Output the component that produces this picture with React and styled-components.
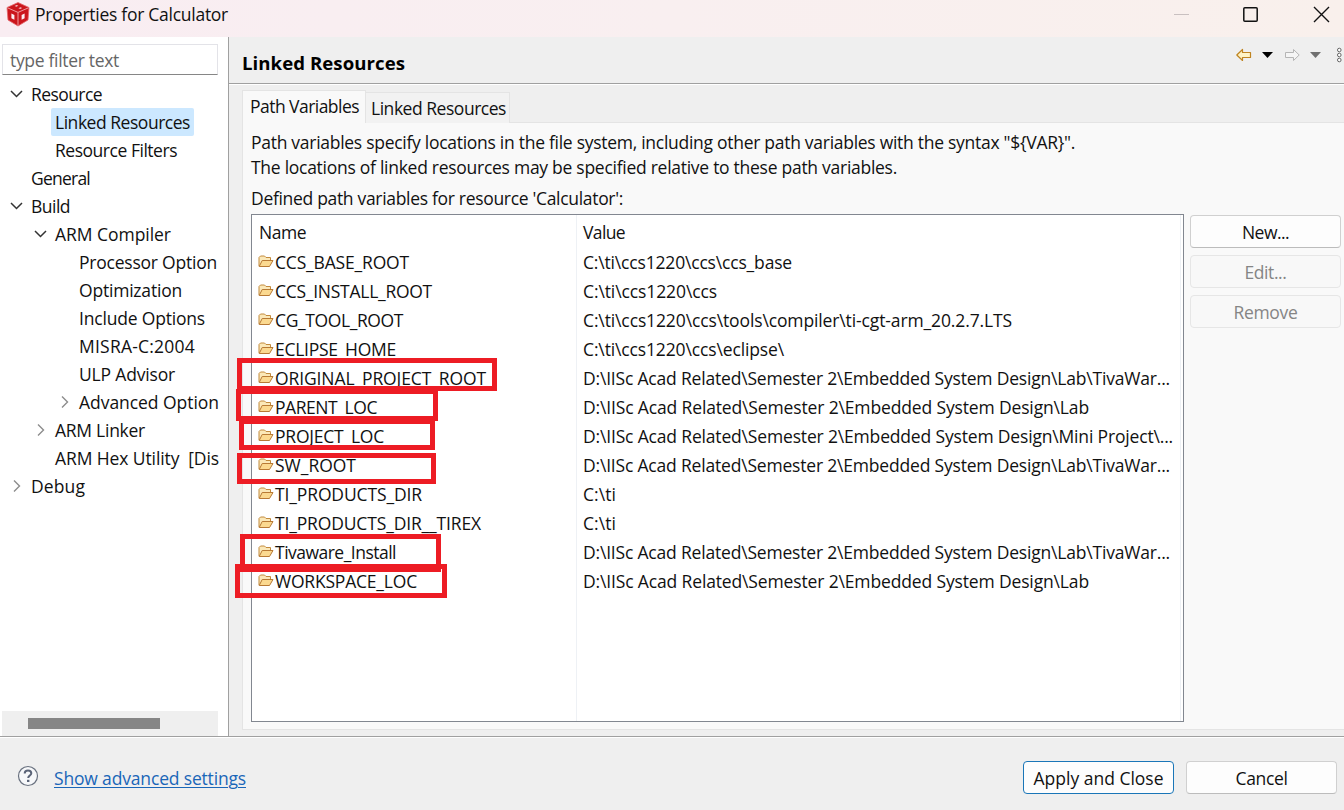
import React, { useLayoutEffect, useRef, useState } from "react";
import styled, { createGlobalStyle, css } from "styled-components";

const Global = createGlobalStyle`
  * { box-sizing: border-box; }
  body { margin: 0; overflow: hidden; background: #efefef; }
`;

const Window = styled.div`
  position: relative;
  width: 1344px;
  height: 810px;
  display: flex;
  flex-direction: column;
  overflow: hidden;
  background: #efefef;
  color: #111;
  font: 17.5px/28px "Open Sans", "Noto Sans", sans-serif;
`;

const TitleBar = styled.header`
  display: flex;
  align-items: flex-start;
  height: 37px;
  flex: none;
  padding: 0 0 0 5px;
  background: linear-gradient(90deg, #f9edf2, #f9eff0 50%, #f9f0ec);
`;
const TitleText = styled.div`
  margin-left: 4px;
  flex: 1;
`;
const WindowButtons = styled.div`
  display: flex;
  align-items: center;
  height: 30px;
  svg { display: block; }
`;

const Body = styled.div`
  display: flex;
  height: 699px;
  flex: none;
`;

const Sidebar = styled.aside`
  display: flex;
  flex-direction: column;
  width: 229px;
  flex: none;
  padding: 7px 0 0 2px;
  background: #fff;
  border-right: 1px solid #a0a0a0;
`;
const FilterBox = styled.div`
  width: 216px;
  height: 31px;
  padding: 1px 0 0 7px;
  border: 1px solid #e3e3e8;
  border-bottom-color: #868686;
  color: #666;
`;
const Tree = styled.div`
  flex: 1;
  width: 217px;
  padding-top: 5px;
`;
const TreeRow = styled.div`
  display: flex;
  height: 28px;
  padding-left: ${(p) => 4 + p.$level * 24}px;
`;
const Arrow = styled.span`
  width: 21px;
  height: 28px;
  flex: none;
  svg { display: block; }
`;
const TreeText = styled.span`
  height: 28px;
  padding: 0 4px;
  white-space: nowrap;
  border-radius: 2px;
  ${(p) => p.$selected && css`background: #cce8ff;`}
`;
const ScrollTrack = styled.div`
  width: 216px;
  height: 25px;
  padding: 7px 26px;
  background: #efefef;
`;
const ScrollThumb = styled.div`
  width: 132px;
  height: 11px;
  background: #868686;
`;

const Main = styled.main`
  display: flex;
  flex-direction: column;
  flex: 1;
`;
const PageHeader = styled.div`
  display: flex;
  justify-content: space-between;
  height: 48px;
  flex: none;
  padding: 12px 0 0 13px;
  border-bottom: 1px solid #fff;
  box-shadow: inset 0 -1px 0 #a0a0a0;
`;
const PageTitle = styled.h1`
  margin: 0;
  font-size: 18.6px;
  line-height: 28px;
  font-weight: 700;
  color: #000;
`;
const HistoryTools = styled.div`
  margin-top: -8px;
  svg { display: block; }
`;

const TabStrip = styled.div`
  display: flex;
  align-items: flex-end;
  height: 38px;
  flex: none;
  padding-left: 13px;
`;
const Tab = styled.div`
  height: ${(p) => (p.$active ? 33 : 31)}px;
  width: ${(p) => p.$width}px;
  padding: ${(p) => (p.$active ? "1px 0 0 7px" : "1px 0 0 5px")};
  border: 1px solid #e4e4e4;
  border-bottom: 0;
  border-left-width: ${(p) => (p.$active ? 1 : 0)}px;
  background: ${(p) => (p.$active ? "#f9f9f9" : "#f2f2f2")};
  z-index: ${(p) => (p.$active ? 1 : 0)};
`;
const Panel = styled.section`
  display: flex;
  flex-direction: column;
  height: 608px;
  margin-top: -1px;
  margin-left: 13px;
  padding: 7px 0 0 8px;
  border: solid #e4e4e4;
  border-width: 1px 0 1px 1px;
  background: #f9f9f9;
`;
const Description = styled.div`
  height: 54px;
  line-height: 25px;
`;
const TableCaption = styled.div`
  height: 30px;
  margin-top: 0;
`;
const PanelContent = styled.div`
  display: flex;
  gap: 6px;
`;
const Table = styled.div`
  display: flex;
  width: 933px;
  height: 508px;
  border: 1px solid #828790;
  background: #fff;
`;
const Column = styled.div`
  width: ${(p) => p.$width}px;
  flex: none;
  border-right: 1px solid #eef1f5;
`;
const HeadCell = styled.div`
  height: 33px;
  padding: 2px 0 0 ${(p) => p.$inset}px;
  line-height: 30px;
`;
const Cell = styled.div`
  display: flex;
  height: 29px;
  padding-left: 6px;
  line-height: 28px;
  svg { display: block; flex: none; margin: 6px 1px 0 0; }
`;

const ButtonColumn = styled.div`
  display: flex;
  flex-direction: column;
  gap: 7px;
  padding-top: 1px;
`;
const Button = styled.div`
  display: flex;
  align-items: center;
  justify-content: center;
  width: 151px;
  height: 33px;
  padding-top: 1px;
  border: 1px solid #d0d0d0;
  border-bottom-color: #bcbcbc;
  border-radius: 4px;
  background: #fdfdfd;
  ${(p) => p.$disabled && css`
    color: #858585;
    background: #f8f8f8;
    border-color: #e6e6e6;
  `}
  ${(p) => p.$primary && css`border-color: #1a76b8;`}
`;

const Footer = styled.footer`
  display: flex;
  height: 74px;
  padding: 24px 7px 0 17px;
  border-top: 1px solid #a0a0a0;
  box-shadow: inset 0 1px 0 #fff;
`;
const HelpIcon = styled.div`
  padding-top: 4px;
  svg { display: block; }
`;
const AdvancedLink = styled.a`
  flex: 1;
  margin-left: 15px;
  padding-top: 3px;
  color: #1a66b8;
`;
const FooterButtons = styled.div`
  display: flex;
  gap: 12px;
`;

const Marker = styled.div`
  position: absolute;
  left: ${(p) => p.$x}px;
  top: ${(p) => p.$y}px;
  width: ${(p) => p.$w}px;
  height: ${(p) => p.$h}px;
  border: 5px solid #ed1c24;
  pointer-events: none;
`;

const Run = styled.span`
  display: inline-block;
  white-space: pre;
  ${(p) => p.$underline && css`text-decoration: underline; text-decoration-thickness: 1px; text-underline-offset: 2px;`}
`;

// Tracks a line of text so that it occupies the given width.
function Label({ children, width, underline }) {
  const ref = useRef(null);
  const [spacing, setSpacing] = useState(0);
  useLayoutEffect(() => {
    const natural = ref.current.getBoundingClientRect().width;
    setSpacing((width - natural) / children.length);
  }, []);
  return (
    <Run ref={ref} $underline={underline} style={{ letterSpacing: spacing }}>
      {children}
    </Run>
  );
}

const Folder = () => (
  <svg width="16" height="15" viewBox="0 0 16 15">
    <path d="M1 12V3.5L2.5 2h4L8 3.5h4.5V6.5" fill="#fbe8b8" stroke="#c28a3c" />
    <path d="M1.2 12.5L4.2 6.5H15L11.5 12.5Z" fill="#fbd990" stroke="#b87a35" strokeLinejoin="round" />
  </svg>
);

const Cube = () => (
  <svg width="26" height="28" viewBox="0 0 26 28">
    <path d="M13 2.5L24 7.5L23 20L13 26L3 20L2 7.5Z" fill="#cb161c" stroke="#e4666b" strokeWidth=".8" strokeLinejoin="round" />
    <path d="M2.5 7.8L13 12.4L23.5 7.8M13 12.4V25.5" fill="none" stroke="#ee9a9e" strokeWidth="1" />
    <path d="M9.6 5.9L11.6 5L13.4 5.8L11.4 6.7ZM13.4 8.2L15.4 7.3L17.2 8.1L15.2 9Z" fill="#f3c3c7" />
    <path d="M6.4 13.6L9.4 15V19.8L6.4 18.2ZM16.6 15L19.6 13.6V18.2L16.6 19.8Z" fill="#fbeef1" />
  </svg>
);

const Chevron = ({ open }) => (
  <svg width="21" height="28" viewBox="0 0 21 28" fill="none">
    {open ? (
      <path d="M5 11L10.5 16.5L16 11" stroke="#333" strokeWidth="1.5" />
    ) : (
      <path d="M8 8.5L13.5 14L8 19.5" stroke="#8c8c8c" strokeWidth="1.4" />
    )}
  </svg>
);

const tree = [
  ["Resource", 0, 71, "open"],
  ["Linked Resources", 1, 135, null, true],
  ["Resource Filters", 1, 122],
  ["General", 0, 59],
  ["Build", 0, 39, "open"],
  ["ARM Compiler", 1, 116, "open"],
  ["Processor Option", 2, 138],
  ["Optimization", 2, 103],
  ["Include Options", 2, 126],
  ["MISRA-C:2004", 2, 116],
  ["ULP Advisor", 2, 96],
  ["Advanced Option", 2, 140, "closed"],
  ["ARM Linker", 1, 90, "closed"],
  ["ARM Hex Utility  [Dis", 1, 164],
  ["Debug", 0, 54, "closed"],
];

const variables = [
  ["CCS_BASE_ROOT", 134, "C:\\ti\\ccs1220\\ccs\\ccs_base", 209],
  ["CCS_INSTALL_ROOT", 157, "C:\\ti\\ccs1220\\ccs", 134],
  ["CG_TOOL_ROOT", 128, "C:\\ti\\ccs1220\\ccs\\tools\\compiler\\ti-cgt-arm_20.2.7.LTS", 429],
  ["ECLIPSE_HOME", 121, "C:\\ti\\ccs1220\\ccs\\eclipse\\", 201],
  ["ORIGINAL_PROJECT_ROOT", 211, "D:\\IISc Acad Related\\Semester 2\\Embedded System Design\\Lab\\TivaWar...", 587],
  ["PARENT_LOC", 102, "D:\\IISc Acad Related\\Semester 2\\Embedded System Design\\Lab", 506],
  ["PROJECT_LOC", 109, "D:\\IISc Acad Related\\Semester 2\\Embedded System Design\\Mini Project\\...", 590],
  ["SW_ROOT", 81, "D:\\IISc Acad Related\\Semester 2\\Embedded System Design\\Lab\\TivaWar...", 587],
  ["TI_PRODUCTS_DIR", 147, "C:\\ti", 33],
  ["TI_PRODUCTS_DIR__TIREX", 206, "C:\\ti", 33],
  ["Tivaware_Install", 121, "D:\\IISc Acad Related\\Semester 2\\Embedded System Design\\Lab\\TivaWar...", 587],
  ["WORKSPACE_LOC", 142, "D:\\IISc Acad Related\\Semester 2\\Embedded System Design\\Lab", 506],
];

const markers = [
  [237, 358, 260, 33],
  [236, 389, 202, 32],
  [239, 419, 196, 31],
  [237, 453, 199, 31],
  [240, 534, 201, 38],
  [235, 564, 212, 34],
];

export default function App() {
  return (
    <>
      <Global />
      <Window>
        <TitleBar>
          <Cube />
          <TitleText><Label width={193}>Properties for Calculator</Label></TitleText>
          <WindowButtons>
            <svg width="170" height="28" viewBox="0 0 170 28" fill="none">
              <path d="M0 13.5H15" stroke="#c9c0c0" />
              <rect x="69.8" y="6.8" width="13.4" height="13.4" rx="1" stroke="#111" strokeWidth="1.5" />
              <path d="M140 6L155 21M155 6L140 21" stroke="#111" strokeWidth="1.4" />
            </svg>
          </WindowButtons>
        </TitleBar>

        <Body>
          <Sidebar>
            <FilterBox><Label width={109}>type filter text</Label></FilterBox>
            <Tree>
              {tree.map(([name, level, width, state, selected]) => (
                <TreeRow key={name} $level={level}>
                  <Arrow>{state && <Chevron open={state === "open"} />}</Arrow>
                  <TreeText $selected={selected}><Label width={width}>{name}</Label></TreeText>
                </TreeRow>
              ))}
            </Tree>
            <ScrollTrack><ScrollThumb /></ScrollTrack>
          </Sidebar>

          <Main>
            <PageHeader>
              <PageTitle><Label width={163}>Linked Resources</Label></PageTitle>
              <HistoryTools>
                <svg width="110" height="28" viewBox="0 0 110 28">
                  <path d="M2.8 14L8.5 8.5V11.5H16.5V16.5H8.5V19.5Z" fill="#fff3c4" stroke="#bf8420" strokeWidth="1.2" strokeLinejoin="round" />
                  <path d="M28 11H39L33.5 17Z" fill="#000" />
                  <path d="M65.2 14L59.5 8.5V11.5H51.5V16.5H59.5V19.5Z" fill="#f5f5f5" stroke="#b5b5b5" strokeLinejoin="round" />
                  <path d="M76 11H87L81.5 17Z" fill="#707070" />
                  <g fill="#fff" stroke="#666">
                    <circle cx="105.3" cy="9" r="1.8" />
                    <circle cx="105.3" cy="14" r="1.8" />
                    <circle cx="105.3" cy="19" r="1.8" />
                  </g>
                </svg>
              </HistoryTools>
            </PageHeader>

            <TabStrip>
              <Tab $active $width={124}><Label width={109}>Path Variables</Label></Tab>
              <Tab $width={144}><Label width={135}>Linked Resources</Label></Tab>
            </TabStrip>
            <Panel>
              <Description>
                <div><Label width={824}>{'Path variables specify locations in the file system, including other path variables with the syntax "${VAR}".'}</Label></div>
                <div><Label width={646}>The locations of linked resources may be specified relative to these path variables.</Label></div>
              </Description>
              <TableCaption><Label width={372}>Defined path variables for resource 'Calculator':</Label></TableCaption>
              <PanelContent>
                <Table>
                  <Column $width={325}>
                    <HeadCell $inset={7}><Label width={47}>Name</Label></HeadCell>
                    {variables.map(([name, width]) => (
                      <Cell key={name}><Folder /><Label width={width}>{name}</Label></Cell>
                    ))}
                  </Column>
                  <Column $width={604}>
                    <HeadCell $inset={6}><Label width={42}>Value</Label></HeadCell>
                    {variables.map(([name, , value, width]) => (
                      <Cell key={name}><Label width={width}>{value}</Label></Cell>
                    ))}
                  </Column>
                </Table>
                <ButtonColumn>
                  <Button><Label width={47}>New...</Label></Button>
                  <Button $disabled><Label width={42}>Edit...</Label></Button>
                  <Button $disabled><Label width={64}>Remove</Label></Button>
                </ButtonColumn>
              </PanelContent>
            </Panel>
          </Main>
        </Body>

        <Footer>
          <HelpIcon>
            <svg width="22" height="22" viewBox="0 0 22 22" fill="none">
              <circle cx="11" cy="11" r="9.5" fill="#f7f8fa" stroke="#69717f" strokeWidth="1.2" />
              <path d="M7.7 8.6C7.7 6.5 9 5.4 11 5.4S14.3 6.5 14.3 8.2C14.3 10.4 11.2 10.6 11.2 13" stroke="#5b6478" strokeWidth="2" />
              <path d="M10 14.8H12.4V17H10Z" fill="#5b6478" />
            </svg>
          </HelpIcon>
          <AdvancedLink><Label width={192} underline>Show advanced settings</Label></AdvancedLink>
          <FooterButtons>
            <Button $primary><Label width={130}>Apply and Close</Label></Button>
            <Button><Label width={52}>Cancel</Label></Button>
          </FooterButtons>
        </Footer>

        {markers.map(([x, y, w, h]) => (
          <Marker key={y} $x={x} $y={y} $w={w} $h={h} />
        ))}
      </Window>
    </>
  );
}
